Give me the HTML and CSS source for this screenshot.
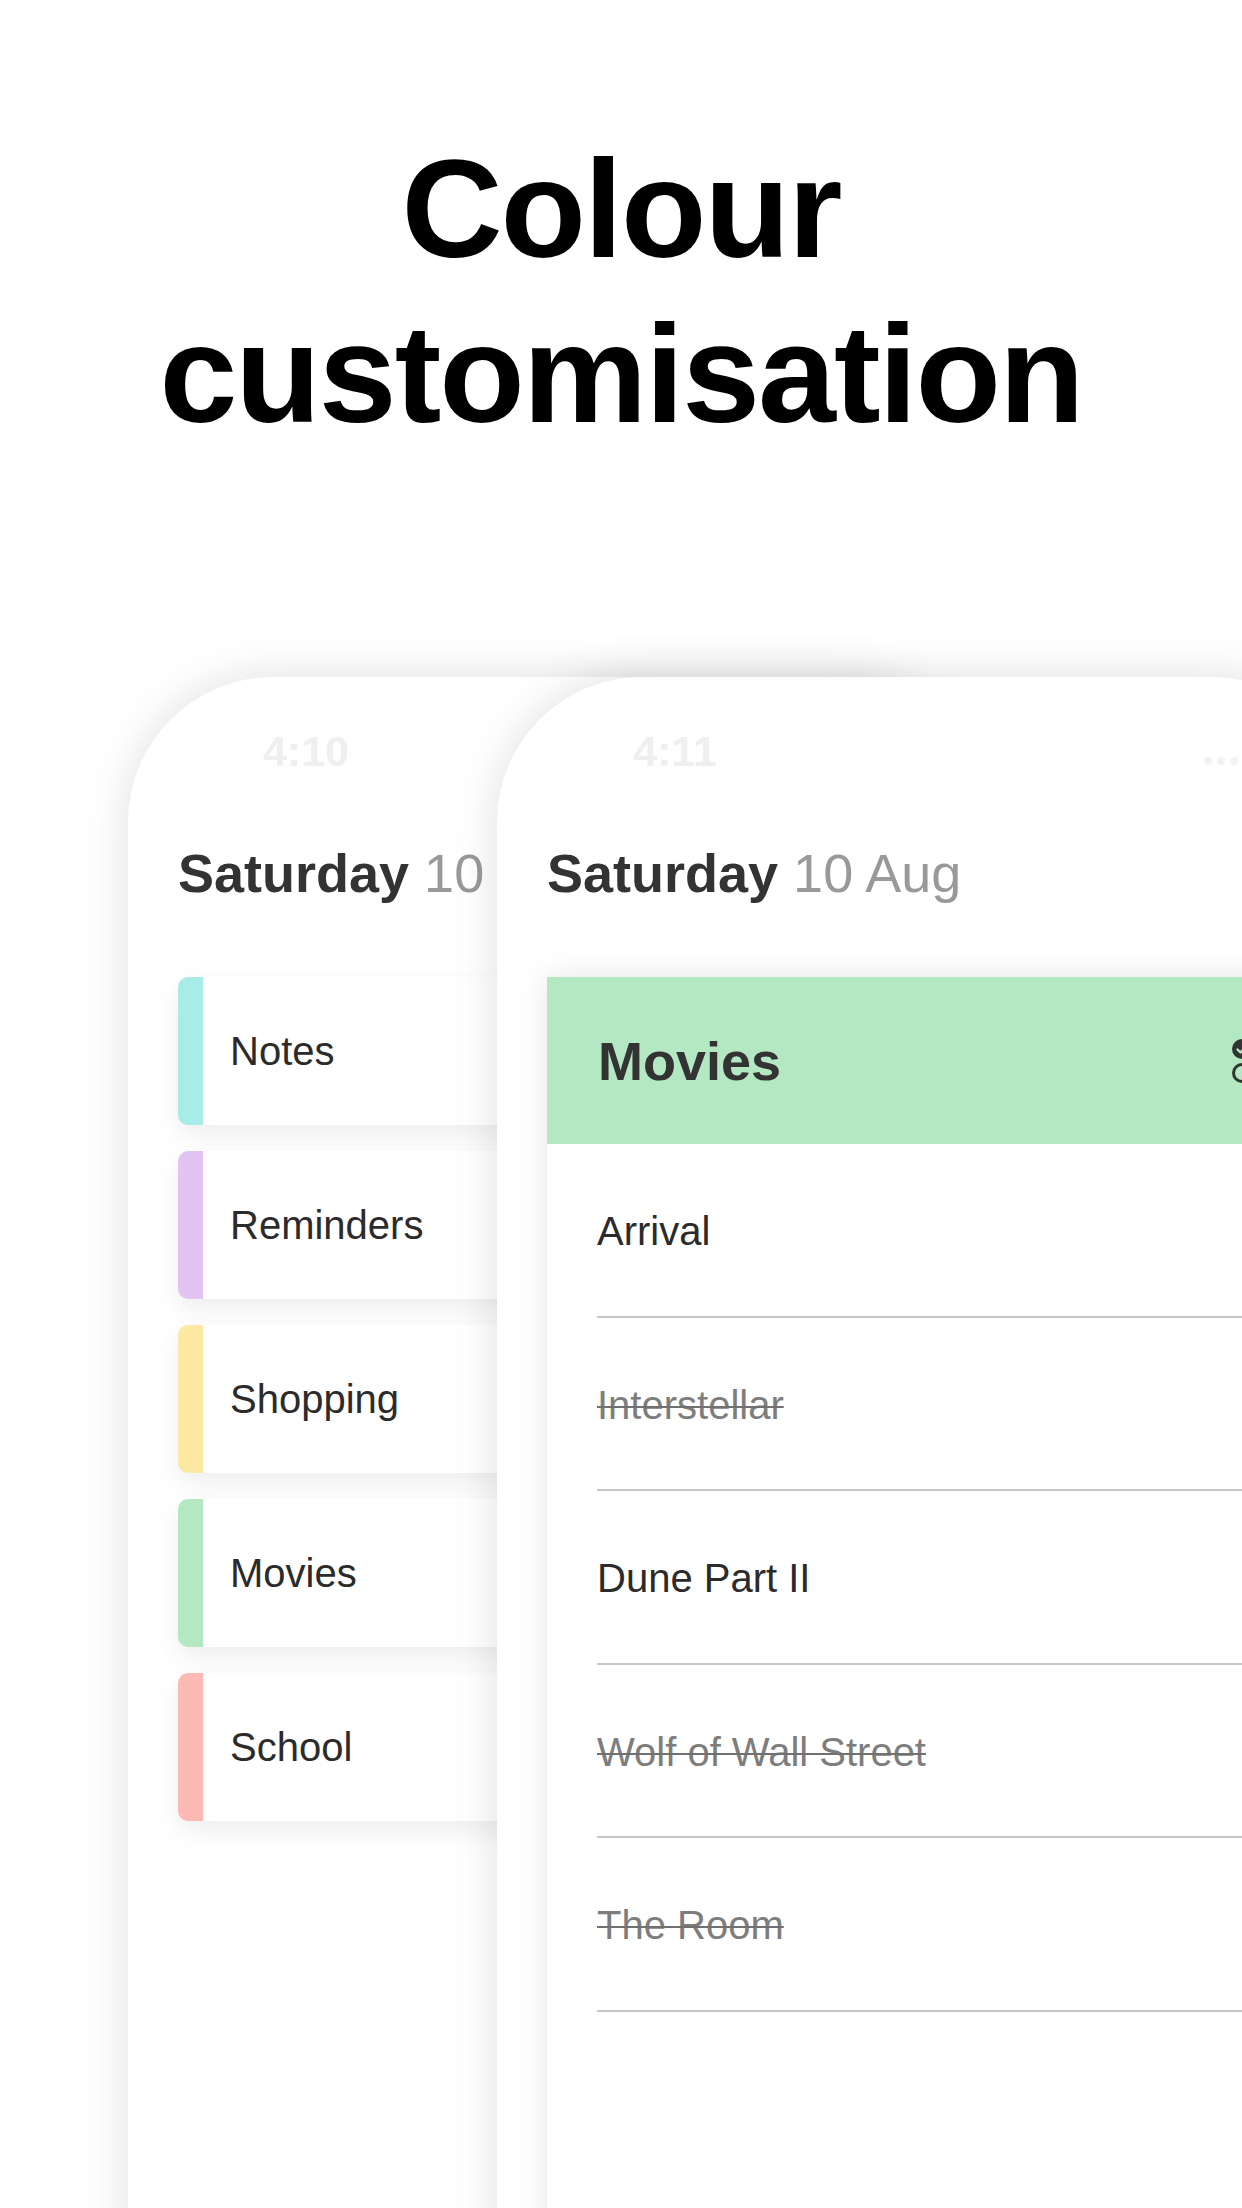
FILE: index.html
```html
<!DOCTYPE html>
<html lang="en">
<head>
    <meta charset="UTF-8">
    <meta name="viewport" content="width=device-width, initial-scale=1.0">
    <title>Colour customisation</title>
    <link rel="stylesheet" href="styles.css">
</head>
<body>
    <div id="heading">Colour<br>customisation</div>

    <div id="stage">
        <div class="phone back">
            <div class="status">
                <span class="time">4:10</span>
            </div>
            <div class="date"><b>Saturday</b> 10</div>
            <div class="lists">
                <div class="list-card notes">Notes</div>
                <div class="list-card reminders">Reminders</div>
                <div class="list-card shopping">Shopping</div>
                <div class="list-card movies">Movies</div>
                <div class="list-card school">School</div>
            </div>
        </div>

        <div class="phone front">
            <div class="status">
                <span class="time">4:11</span>
                <span class="dots"><i></i><i></i><i></i></span>
            </div>
            <div class="date"><b>Saturday</b> 10 Aug</div>
            <div class="open-list">
                <div class="list-head">
                    <span>Movies</span>
                    <svg width="22" height="46" viewBox="0 0 22 46">
                        <circle cx="11" cy="11" r="10" fill="#333"/>
                        <path d="M6.5 11.5 L9.5 14.5 L15.5 8" fill="none" stroke="#b4e8c2" stroke-width="2.4" stroke-linecap="round" stroke-linejoin="round"/>
                        <circle cx="11" cy="35" r="8.5" fill="none" stroke="#333" stroke-width="3"/>
                    </svg>
                </div>
                <div class="item"><span>Arrival</span></div>
                <div class="item done"><span>Interstellar</span></div>
                <div class="item"><span>Dune Part II</span></div>
                <div class="item done"><span>Wolf of Wall Street</span></div>
                <div class="item done"><span>The Room</span></div>
            </div>
        </div>
    </div>
</body>
</html>
```

FILE: styles.css
```css
*{
    font-family: "Liberation Sans", Arial, sans-serif;
    box-sizing: border-box;
}
html, body{
    margin: 0;
    background: #fff;
    overflow: hidden;
}
#heading{
    margin-top: 126px;
    text-align: center;
    font-size: 140px;
    font-weight: bold;
    line-height: 165px;
    letter-spacing: -2px;
    color: #000;
}

/* the two phones, the front one overlapping the back one */
#stage{
    display: flex;
    align-items: flex-start;
    margin-top: 161px;
    padding: 60px 0 0 128px;
    height: 1591px;
    overflow: hidden;
}
.phone{
    flex-shrink: 0;
    width: 860px;
    height: 1600px;
    padding: 49px 50px 0;
    background: #fff;
    border-radius: 145px 145px 0 0;
    box-shadow: 0 0 45px rgba(0, 0, 0, 0.13);
}
.back{
    margin-right: -491px;
}
.status{
    display: flex;
    height: 50px;
}
.time{
    width: 200px;
    margin-left: 28px;
    text-align: center;
    font-size: 43px;
    font-weight: bold;
    line-height: 50px;
    color: #efefef;
}
.dots{
    display: flex;
    gap: 5px;
    margin-left: 429px;
    margin-top: 31px;
}
.dots i{
    width: 8px;
    height: 8px;
    border-radius: 50%;
    background: #f3f3f3;
}
.date{
    margin-top: 65px;
    font-size: 54px;
    line-height: 64px;
    color: #999;
    white-space: nowrap;
}
.date b{
    color: #333;
}

/* back phone: list of lists */
.lists{
    display: flex;
    flex-direction: column;
    gap: 26px;
    margin-top: 72px;
}
.list-card{
    display: flex;
    align-items: center;
    height: 148px;
    padding-left: 27px;
    background: #fff;
    border-left: 25px solid;
    border-radius: 10px 0 0 10px;
    box-shadow: 0 10px 26px rgba(0, 0, 0, 0.07);
    font-size: 40px;
    color: #2b2b2b;
}
.notes{ border-left-color: #a7ece6; }
.reminders{ border-left-color: #e2c4f2; }
.shopping{ border-left-color: #fde9a2; }
.movies{ border-left-color: #b4e8c2; }
.school{ border-left-color: #fdb9b4; }

/* front phone: the open list */
.open-list{
    margin-top: 72px;
    height: 1500px;
    background: #fff;
    box-shadow: 0 0 30px rgba(0, 0, 0, 0.1);
}
.list-head{
    display: flex;
    align-items: center;
    justify-content: space-between;
    height: 167px;
    padding: 0 54px 0 51px;
    background: #b4e8c2;
    font-size: 54px;
    font-weight: bold;
    color: #333;
}
.item{
    display: flex;
    align-items: center;
    height: 173.5px;
    margin-left: 50px;
    padding-top: 4px;
    border-bottom: 2px solid #c6c6c6;
    font-size: 40px;
    color: #2b2b2b;
}
.done span{
    color: #7d7d7d;
    text-decoration: line-through;
    text-decoration-color: #707070;
    text-decoration-thickness: 2px;
}
```
